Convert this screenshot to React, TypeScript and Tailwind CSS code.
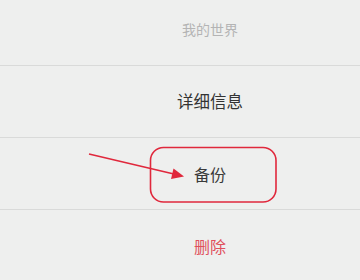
import React from 'react';

const rows = [
  { label: '我的世界', className: 'text-[14px] text-[#b4b4b4]' },
  { label: '详细信息', className: 'text-[16.5px] text-[#333333]' },
  { label: '备份', className: 'text-[16px] text-[#3a3a3a]' },
  { label: '删除', className: 'text-[16px] text-[#e0505c]' },
];

const App: React.FC = () => {
  return (
    <div
      className="relative w-[360px] h-[280px] overflow-hidden bg-[#eeefee]"
      style={{ fontFamily: '"Noto Sans CJK SC", "Noto Sans", sans-serif' }}
    >
      <div className="flex flex-col -mt-[6px]">
        {rows.map((row, i) => (
          <div
            key={row.label}
            className={`h-[72px] flex items-center justify-center pl-[60px] ${
              i < rows.length - 1 ? 'border-b border-[#d9dad9]' : ''
            }`}
          >
            <span className={row.className}>{row.label}</span>
          </div>
        ))}
      </div>

      {/* annotation */}
      <svg className="absolute inset-0 pointer-events-none" width="360" height="280" viewBox="0 0 360 280">
        <rect x="150.5" y="147.5" width="125.5" height="54.5" rx="13" fill="none" stroke="#e0283c" strokeWidth="1.6" />
        <line x1="89" y1="154" x2="176" y2="174.5" stroke="#e0283c" strokeWidth="1.6" />
        <polygon points="184,176.5 173.5,168.5 171,179" fill="#e0283c" />
      </svg>
    </div>
  );
};

export default App;
